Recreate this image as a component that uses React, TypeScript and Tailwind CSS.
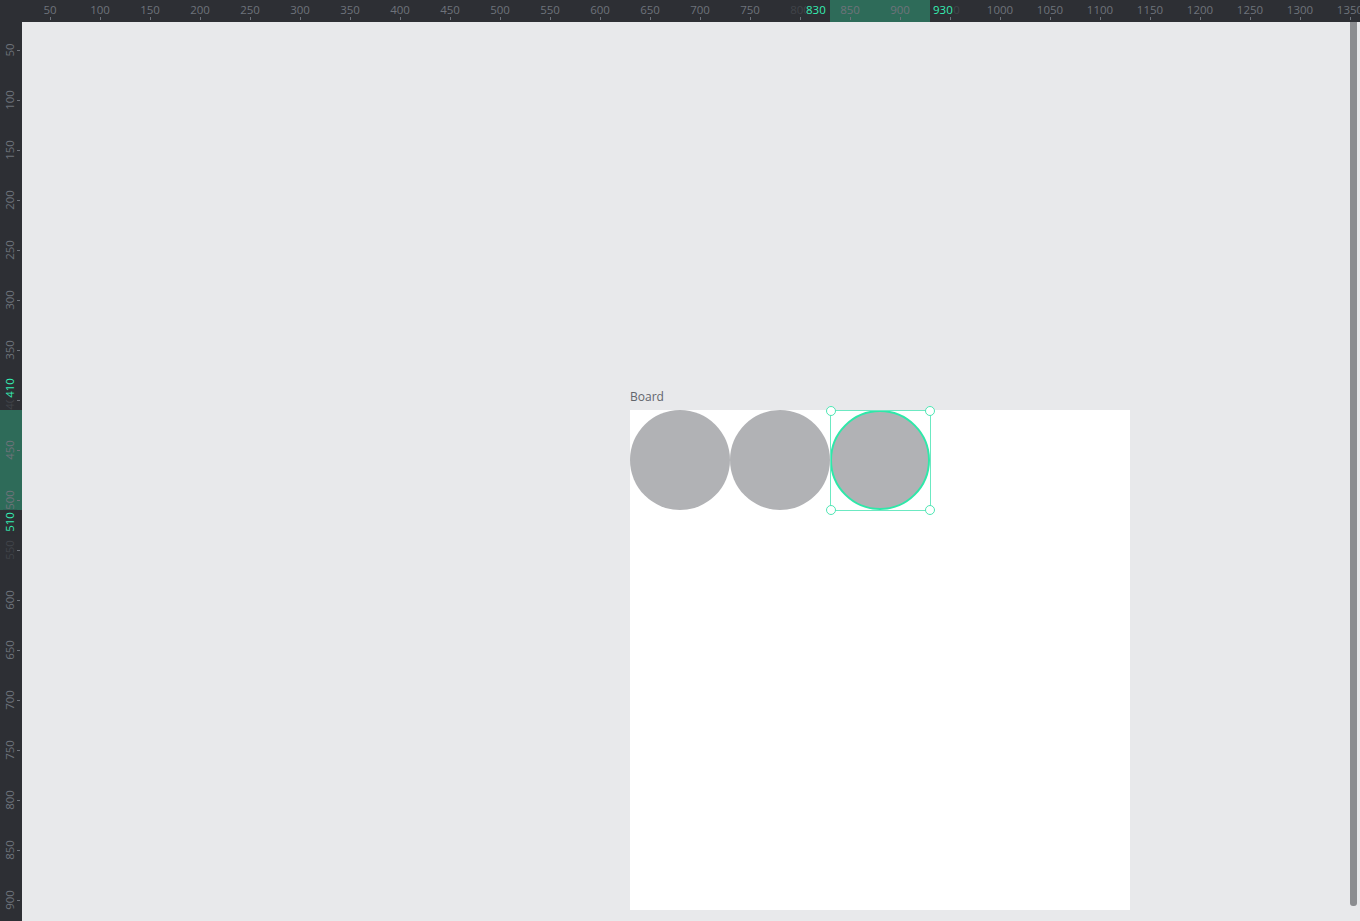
const TOP_MARKS = Array.from({ length: 27 }, (_, i) => (i + 1) * 50);
const LEFT_MARKS = Array.from({ length: 18 }, (_, i) => (i + 1) * 50);

// marks that sit under the selection labels get faded
const DIM_TOP = [800, 950];
const DIM_LEFT = [400, 550];

const RULER = 22;

function TopRuler() {
  return (
    <div className="relative h-[22px] flex-1 overflow-hidden bg-[#2d2f34]">
      <div className="absolute top-0 left-[808px] h-[22px] w-[100px] bg-[#2e6b59]" />
      {TOP_MARKS.map((m) => (
        <div key={m} className="absolute top-0 h-[22px]" style={{ left: m - RULER }}>
          <span
            className={
              "absolute top-[3px] left-0 -translate-x-1/2 text-[11.5px] leading-[14px] text-[#6e737b] " +
              (DIM_TOP.includes(m) ? "opacity-30" : "")
            }
          >
            {m}
          </span>
          <span className="absolute top-[17px] left-0 h-[3px] w-px bg-[#6e737b]" />
        </div>
      ))}
      <span className="absolute top-[3px] left-[784px] bg-[#2d2f34] pr-[2px] text-[11.5px] leading-[14px] text-[#35edb3]">
        830
      </span>
      <span className="absolute top-[3px] left-[908px] bg-[#2d2f34] pl-[3px] text-[11.5px] leading-[14px] text-[#35edb3]">
        930
      </span>
    </div>
  );
}

function LeftRuler() {
  return (
    <div className="relative h-full w-[22px] shrink-0 overflow-hidden bg-[#2d2f34]">
      <div className="absolute top-[388px] left-0 h-[100px] w-[22px] bg-[#2e6b59]" />
      {LEFT_MARKS.map((m) => (
        <div key={m} className="absolute left-0 w-[22px]" style={{ top: m - RULER }}>
          <span
            className={
              "absolute top-0 left-[10px] -translate-x-1/2 -translate-y-1/2 -rotate-90 text-[11.5px] leading-[14px] text-[#6e737b] " +
              (DIM_LEFT.includes(m) ? "opacity-30" : "")
            }
          >
            {m}
          </span>
          <span className="absolute top-0 left-[17px] h-px w-[3px] bg-[#6e737b]" />
        </div>
      ))}
      <span className="absolute top-[366px] left-[10px] -translate-x-1/2 -translate-y-1/2 -rotate-90 bg-[#2d2f34] px-[2px] text-[11.5px] leading-[14px] text-[#35edb3]">
        410
      </span>
      <span className="absolute top-[500px] left-[10px] -translate-x-1/2 -translate-y-1/2 -rotate-90 bg-[#2d2f34] px-[2px] text-[11.5px] leading-[14px] text-[#35edb3]">
        510
      </span>
    </div>
  );
}

function Handle({ pos }: { pos: string }) {
  return (
    <span
      className={
        "absolute h-[10px] w-[10px] -translate-x-1/2 -translate-y-1/2 rounded-full border border-[#4fe6b4] bg-white " +
        pos
      }
    />
  );
}

export default function App() {
  return (
    <div
      className="flex h-[921px] w-[1360px] flex-col overflow-hidden bg-[#e8e9eb]"
      style={{ fontFamily: '"Open Sans", "Liberation Sans", sans-serif' }}
    >
      <div className="flex shrink-0">
        <div className="h-[22px] w-[22px] shrink-0 bg-[#2d2f34]" />
        <TopRuler />
      </div>
      <div className="flex min-h-0 flex-1">
        <LeftRuler />
        <div className="relative flex-1">
          <div className="absolute top-[367px] left-[608px]">
            <div className="mb-[6px] text-[12px] leading-[15px] text-[#62656b]">Board</div>
            <div className="relative h-[500px] w-[500px] bg-white">
              <div className="flex">
                <div className="h-[100px] w-[100px] rounded-full bg-[#b1b2b5]" />
                <div className="h-[100px] w-[100px] rounded-full bg-[#b1b2b5]" />
                <div className="h-[100px] w-[100px] rounded-full border-2 border-[#2fe8a9] bg-[#b1b2b5]" />
              </div>
              <div className="absolute top-0 left-[200px] h-[101px] w-[101px] border border-[#6ce9c2]">
                <Handle pos="top-0 left-0" />
                <Handle pos="top-0 left-full" />
                <Handle pos="top-full left-0" />
                <Handle pos="top-full left-full" />
              </div>
            </div>
          </div>
          <div className="absolute top-0 right-[3px] h-[884px] w-[7px] rounded-b-[3px] bg-[#8b8d90]" />
        </div>
      </div>
    </div>
  );
}
